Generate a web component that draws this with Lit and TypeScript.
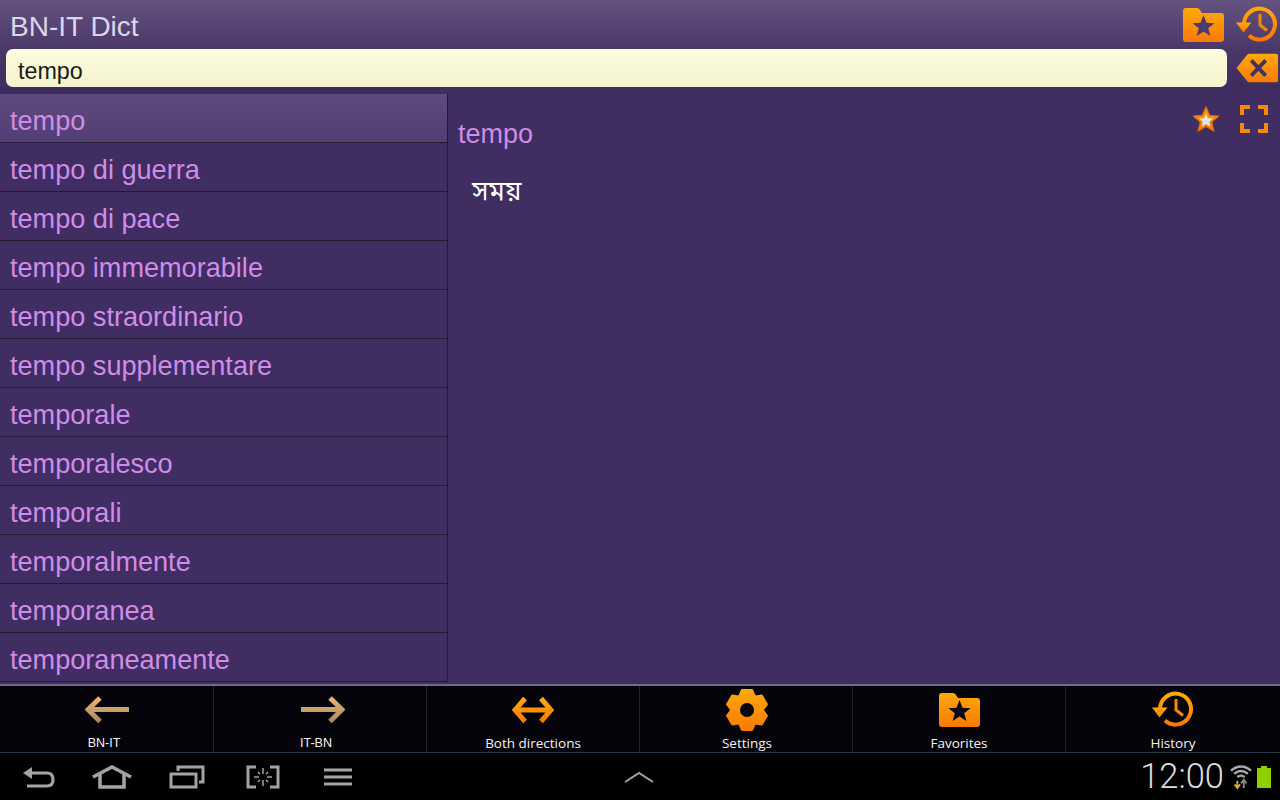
import { LitElement, html, css, svg } from "lit";
import { customElement } from "lit/decorators.js";

const grad = (id: string, a = "#ffa90a", b = "#f97a03") => svg`<defs><linearGradient id=${id} x1="0" y1="0" x2="0" y2="1"><stop offset="0" stop-color=${a}/><stop offset="1" stop-color=${b}/></linearGradient></defs>`;

const folder = (id: string, star: string, w: number, h: number) => html`<svg width=${w} height=${h} viewBox="0 0 41 34">${grad(id)}
  <path d="M3 0h11q2 0 3 2l2 3h19q3 0 3 3v23q0 3-3 3H3q-3 0-3-3V3q0-3 3-3z" fill="url(#${id})"/>
  <path d="M20.500 7l3 7.800 8 .4-6.300 5 2.200 7.900-6.900-4.500-6.900 4.500 2.200-7.900-6.300-5 8-.4z" fill=${star}/></svg>`;

const history = (id: string, w: number, h: number) => html`<svg width=${w} height=${h} viewBox="0 0 42 38">${grad(id)}
  <path d="M8 18A15.500 15.500 0 1 1 13 29.500" fill="none" stroke="url(#${id})" stroke-width="4"/>
  <path d="M0 16.500h15.500l-8 10z" fill="url(#${id})"/>
  <path d="M24 8v11l7 5.500" fill="none" stroke="#f68a08" stroke-width="3"/></svg>`;

const gearPath = () => {
  const pts: string[] = [];
  const p = (r: number, deg: number) => {
    const a = ((deg - 90) * Math.PI) / 180;
    return `${(22 + r * Math.cos(a)).toFixed(2)} ${(22 + r * Math.sin(a)).toFixed(2)}`;
  };
  for (let i = 0; i < 6; i++) {
    const c = i * 60;
    pts.push(p(16, c - 27), p(20.500, c - 14), p(20.500, c + 14), p(16, c + 27));
  }
  return `M${pts.join("L")}z`;
};

@customElement("app-root")
export class AppRoot extends LitElement {
  static styles = css`
    :host { display: flex; flex-direction: column; width: 1280px; height: 800px; overflow: hidden; background: #402d61; font-family: "Liberation Sans", Arial, sans-serif; }
    .top { height: 94px; flex: none; box-sizing: border-box; display: flex; flex-direction: column; background: linear-gradient(#65527f 0, #4a3768 50px, #3e2b5f 90px); }
    .titlebar { height: 49px; flex: none; display: flex; align-items: center; padding: 0 2px 0 10px; box-sizing: border-box; color: #dcd6ec; font-size: 28px; }
    .titlebar .t { flex: 1; padding-top: 5px; }
    .ticons { display: flex; align-items: center; gap: 12px; padding-top: 1px; }
    .ticons svg { display: block; }
    .searchrow { display: flex; align-items: flex-start; padding-left: 6px; }
    .search { width: 1221px; height: 38px; box-sizing: border-box; border-radius: 7px; background: linear-gradient(#fcfcdf, #f3f3cd); color: #1d1a14; font-size: 23.300px; line-height: 44px; padding-left: 12px; }
    .clear { margin: 4px 0 0 9px; display: block; }
    .main { flex: 1; display: flex; min-height: 0; }
    .list { width: 448px; flex: none; box-sizing: border-box; }
    .row { height: 49px; box-sizing: border-box; border-bottom: 1px solid #241a38; border-right: 1px solid #241a38; color: #d08ce8; font-size: 27.100px; line-height: 53px; padding-left: 10px; white-space: nowrap; }
    .row.sel { background: linear-gradient(#5e4a7e, #523e72); }
    .detail { flex: 1; display: flex; flex-direction: column; position: relative; }
    .word { color: #d08ce8; font-size: 27px; line-height: 30px; padding: 25px 0 0 10px; }
    .trans { color: #fff; font-size: 26.500px; line-height: 34px; padding: 28px 0 0 24px; font-family: "Noto Sans Bengali", "Noto Sans", "DejaVu Sans", sans-serif; }
    .dicons { position: absolute; top: 11px; right: 12px; display: flex; align-items: center; gap: 20px; }
    .dicons svg { display: block; }
    .bar { height: 69px; flex: none; box-sizing: border-box; border-top: 2px solid #75698a; border-bottom: 1px solid #1c3748; background: #06040b; display: flex; }
    .item { width: 213px; flex: none; box-sizing: border-box; border-right: 1px solid #232229; display: flex; flex-direction: column; align-items: center; color: #f2f2f2; font-family: "Open Sans", sans-serif; font-size: 13.500px; }
    .item:first-child { width: 214px; }
    .item:last-child { flex: 1; border-right: none; }
    .item .ic { height: 48px; display: flex; align-items: center; justify-content: center; }
    .item .lb { line-height: 16px; margin-top: 1px; }
    .item .lb.small { font-family: "Liberation Sans", sans-serif; font-size: 12.500px; }
    .l1 { margin-right: 5px; }
    .l2 { margin-right: 8px; }
    .i2 { margin-left: 6px; }
    .s4 > * { margin-left: 2px; }
    .nav { height: 47px; flex: none; background: #000; display: flex; align-items: center; position: relative; }
    .navl { display: flex; align-items: center; }
    .navl svg, .nav svg { display: block; }
    .spacer { flex: 1; }
    .up { position: absolute; left: 624px; top: 18px; }
    .clock { color: #dcdcdc; font-size: 34.500px; font-family: "Roboto", "Liberation Sans", sans-serif; font-weight: 300; line-height: 47px; margin-right: 6px; }
    .status { display: flex; align-items: center; gap: 5px; margin-right: 9px; }
  `;

  render() {
    const words = ["tempo", "tempo di guerra", "tempo di pace", "tempo immemorabile", "tempo straordinario", "tempo supplementare", "temporale", "temporalesco", "temporali", "temporalmente", "temporanea", "temporaneamente"];
    const nav = "#a3a3a3";
    return html`
      <div class="top">
        <div class="titlebar">
          <div class="t">BN-IT Dict</div>
          <div class="ticons">
            ${folder("g1", "#4c3a6e", 41, 34)}
            ${history("g2", 42, 38)}
          </div>
        </div>
        <div class="searchrow">
          <div class="search">tempo</div>
          <svg class="clear" width="43" height="30" viewBox="0 0 45 30">${grad("g3")}
            <path d="M0.500 15L12 1q1-1 2-1h28q2 0 2 2v26q0 2-2 2H14q-1 0-2-1z" fill="url(#g3)"/>
            <path d="M16 7l15 16M31 7L16 23" stroke="#43325f" stroke-width="4" fill="none"/></svg>
        </div>
      </div>
      <div class="main">
        <div class="list">
          ${words.map((w, i) => html`<div class="row ${i === 0 ? "sel" : ""}">${w}</div>`)}
        </div>
        <div class="detail">
          <div class="word">tempo</div>
          <div class="trans">সময়</div>
          <div class="dicons">
            <svg width="28" height="28" viewBox="0 0 28 27">${grad("g4", "#ff9a0a", "#f07a05")}
              <path d="M14 1l3.700 8.800 9.300.8-7.100 6 2.200 9.400-8.100-5-8.100 5 2.200-9.400-7.100-6 9.300-.8z" fill="url(#g4)" stroke="#d8690c" stroke-width="1"/>
              <path d="M14 8l2 4.700 5 .4-3.800 3.200 1.200 5-4.400-2.700-4.400 2.700 1.200-5L7 13.100l5-.4z" fill="#e6e6e8"/></svg>
            <svg width="28" height="28" viewBox="0 0 28 28">
              <path d="M2 10V2h8M18 2h8v8M26 18v8h-8M10 26H2v-8" fill="none" stroke="#f68a08" stroke-width="4"/></svg>
          </div>
        </div>
      </div>
      <div class="bar">
        <div class="item"><div class="ic">
          <svg width="44" height="30" viewBox="0 0 44 30"><defs><linearGradient id="b1" x1="0" y1="0" x2="0" y2="1"><stop offset="0" stop-color="#e8b56e"/><stop offset="1" stop-color="#a88a68"/></linearGradient></defs>
            <path d="M15 3L3 14.500l12 12M4 14.500h40" fill="none" stroke="url(#b1)" stroke-width="5"/></svg></div>
          <div class="lb small l1">BN-IT</div></div>
        <div class="item"><div class="ic i2">
          <svg width="44" height="30" viewBox="0 0 44 30"><defs><linearGradient id="b2" x1="0" y1="0" x2="0" y2="1"><stop offset="0" stop-color="#e8b56e"/><stop offset="1" stop-color="#a88a68"/></linearGradient></defs>
            <path d="M29 3l12 11.500-12 12M40 14.500H0" fill="none" stroke="url(#b2)" stroke-width="5"/></svg></div>
          <div class="lb small l2">IT-BN</div></div>
        <div class="item"><div class="ic">
          <svg width="42" height="28" viewBox="0 0 42 28">${grad("b3")}
            <path d="M13 2.500L3 14l10 11.500M29 2.500L39 14 29 25.500M4 14h34" fill="none" stroke="url(#b3)" stroke-width="5"/></svg></div>
          <div class="lb">Both directions</div></div>
        <div class="item s4"><div class="ic">
          <svg width="44" height="44" viewBox="0 0 44 44">${grad("b4")}
            <path fill="url(#b4)" stroke="url(#b4)" stroke-width="2.400" stroke-linejoin="round" d=${gearPath()}/>
            <circle cx="22" cy="22" r="7" fill="#06040b"/></svg></div>
          <div class="lb">Settings</div></div>
        <div class="item"><div class="ic">${folder("b5", "#0a0710", 41, 34)}</div>
          <div class="lb">Favorites</div></div>
        <div class="item"><div class="ic">${history("b6", 42, 38)}</div>
          <div class="lb">History</div></div>
      </div>
      <div class="nav">
        <div class="navl">
          <svg style="margin-left:23px" width="32" height="22" viewBox="0 0 32 22"><path d="M5 7h19q6 0 6 6.500T24 20H4" fill="none" stroke=${nav} stroke-width="3.200"/><path d="M0 7l9-6v12z" fill=${nav}/></svg>
          <svg style="margin-left:37px" width="40" height="24" viewBox="0 0 40 24"><path d="M1 12L20 2l19 10M8 9v13h24V9" fill="none" stroke=${nav} stroke-width="3.600"/></svg>
          <svg style="margin-left:37px" width="36" height="24" viewBox="0 0 36 24"><path d="M2 9h25v13H2zM9 6V2h25v15h-4" fill="none" stroke=${nav} stroke-width="3"/></svg>
          <svg style="margin-left:41px" width="34" height="24" viewBox="0 0 34 24"><path d="M10 2H2v20h8M24 2h8v20h-8" fill="none" stroke=${nav} stroke-width="3"/><path d="M17 3v6M17 15v6M8 12h5M21 12h5M12 7l2 2M20 15l2 2M22 7l-2 2M14 15l-2 2" stroke=${nav} stroke-width="1.500"/></svg>
          <svg style="margin-left:44px" width="28" height="20" viewBox="0 0 28 20"><path d="M0 3h28M0 10h28M0 17h28" stroke=${nav} stroke-width="3.200"/></svg>
        </div>
        <svg class="up" width="30" height="12" viewBox="0 0 30 12"><path d="M1 11L15 2l14 9" fill="none" stroke=${nav} stroke-width="2"/></svg>
        <div class="spacer"></div>
        <div class="clock">12:00</div>
        <div class="status">
          <svg width="22" height="28" viewBox="0 0 24 28">
            <path d="M1 7q11-9 22 0M4.500 10.500q7.500-6 15 0M8 14q4-3 8 0" fill="none" stroke="#a8a8a8" stroke-width="2.600"/>
            <path d="M8 18v7M5 22l3 4 3-4" fill="none" stroke="#e6ac25" stroke-width="2"/><path d="M15 26v-8M12 21l3-4 3 4" fill="none" stroke="#8a8a8a" stroke-width="2"/></svg>
          <svg width="14" height="22" viewBox="0 0 14 22"><path d="M4 0h6v2h4v20H0V2h4z" fill="#8fce00"/></svg>
        </div>
      </div>
    `;
  }
}
